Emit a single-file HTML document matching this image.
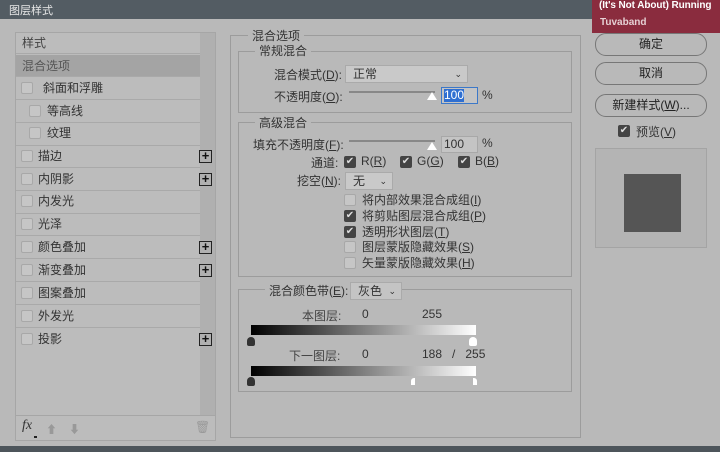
<!DOCTYPE html><html><head><meta charset="utf-8"><style>
*{margin:0;padding:0;box-sizing:border-box}
body{width:720px;height:452px;background:#b9b9b9;font-family:"Liberation Sans","Noto Sans CJK SC",sans-serif;font-size:12px;color:#333;position:relative;overflow:hidden}
.a{position:absolute}
.t{position:absolute;white-space:nowrap}
.cb{position:absolute;width:12px;height:12px;border:1px solid #a8a8a8;background:#c6c6c6;border-radius:2px}
.ck{position:absolute;width:12px;height:12px;background:#444;border-radius:2px;color:#ddd;font-size:10px;line-height:12px;text-align:center}
.row{position:absolute;left:16px;width:184px;height:22px;border-bottom:1px solid #a9a9a9}
.plus{position:absolute;left:183px;width:13px;height:13px;border:1px solid #222;font-size:13px;line-height:10px;text-align:center;color:#111;font-weight:bold}
.box{position:absolute;border:1px solid #9c9c9c}
.btn{position:absolute;left:595px;width:112px;height:23px;border:1px solid #777;border-radius:11px;text-align:center;line-height:21px;font-size:12px;color:#222}
.sel{position:absolute;background:#c9c9c9;border:1px solid #aaa;height:18px;line-height:16px;padding-left:7px}
</style></head><body>
<div class="a" style="left:0;top:0;width:720px;height:19px;background:#535c63"></div>
<div class="t" style="left:9px;top:2px;font-size:11px;color:#e8e8e8">图层样式</div>
<div class="a" style="left:0;top:446px;width:720px;height:6px;background:#4d555b"></div>

<!-- left list -->
<div class="a" style="left:15px;top:32px;width:201px;height:409px;border:1px solid #a6a6a6;background:#bcbcbc"></div>
<div class="a" style="left:200px;top:33px;width:15px;height:382px;background:#b0b0b0"></div>
<div class="a" style="left:16px;top:415px;width:199px;height:1px;background:#a6a6a6"></div>
<div class="row" style="top:32px"><span class="t" style="left:6px;top:2px;color:#444">样式</span></div>
<div class="row" style="top:55px;background:#a4a4a4"><span class="t" style="left:6px;top:2px;color:#555">混合选项</span></div>
<div class="row" style="top:78px"><div class="cb" style="left:5px;top:4px"></div><span class="t" style="left:27px;top:1px">斜面和浮雕</span></div>
<div class="row" style="top:101px"><div class="cb" style="left:13px;top:4px"></div><span class="t" style="left:31px;top:1px">等高线</span></div>
<div class="row" style="top:124px"><div class="cb" style="left:13px;top:3px"></div><span class="t" style="left:31px;top:0px">纹理</span></div>
<div class="row" style="top:146px"><div class="cb" style="left:5px;top:4px"></div><span class="t" style="left:22px;top:1px">描边</span><div class="plus" style="top:4px">+</div></div>
<div class="row" style="top:169px"><div class="cb" style="left:5px;top:4px"></div><span class="t" style="left:22px;top:1px">内阴影</span><div class="plus" style="top:4px">+</div></div>
<div class="row" style="top:192px"><div class="cb" style="left:5px;top:3px"></div><span class="t" style="left:22px;top:0px">内发光</span></div>
<div class="row" style="top:214px"><div class="cb" style="left:5px;top:4px"></div><span class="t" style="left:22px;top:1px">光泽</span></div>
<div class="row" style="top:237px"><div class="cb" style="left:5px;top:4px"></div><span class="t" style="left:22px;top:1px">颜色叠加</span><div class="plus" style="top:4px">+</div></div>
<div class="row" style="top:260px"><div class="cb" style="left:5px;top:4px"></div><span class="t" style="left:22px;top:1px">渐变叠加</span><div class="plus" style="top:4px">+</div></div>
<div class="row" style="top:283px"><div class="cb" style="left:5px;top:4px"></div><span class="t" style="left:22px;top:1px">图案叠加</span></div>
<div class="row" style="top:306px"><div class="cb" style="left:5px;top:4px"></div><span class="t" style="left:22px;top:1px">外发光</span></div>
<div class="row" style="top:329px;border:none"><div class="cb" style="left:5px;top:4px"></div><span class="t" style="left:22px;top:1px">投影</span><div class="plus" style="top:4px">+</div></div>
<div class="t" style="left:22px;top:418px;font-style:italic;font-family:'Liberation Serif',serif;font-size:14px;color:#333">fx</div>
<div class="a" style="left:34px;top:436px;width:3px;height:2px;background:#222"></div>
<div class="t" style="left:46px;top:421px;color:#999;font-size:11px">⬆</div>
<div class="t" style="left:69px;top:421px;color:#999;font-size:11px">⬇</div>
<div class="t" style="left:195px;top:420px;color:#999;font-size:12px">🗑</div>

<!-- middle -->
<div class="box" style="left:230px;top:35px;width:351px;height:403px"></div>
<div class="t" style="left:248px;top:27px;background:#b9b9b9;padding:0 4px">混合选项</div>
<div class="box" style="left:238px;top:51px;width:334px;height:62px"></div>
<div class="t" style="left:255px;top:42px;background:#b9b9b9;padding:0 4px">常规混合</div>
<div class="t" style="left:274px;top:66px">混合模式(<u>D</u>):</div>
<div class="sel" style="left:345px;top:65px;width:123px">正常<span style="position:absolute;right:5px;top:0;font-size:9px">⌄</span></div>
<div class="t" style="left:274px;top:88px">不透明度(<u>O</u>):</div>
<div class="a" style="left:349px;top:91px;width:86px;height:2px;background:#888"></div>
<div class="a" style="left:427px;top:92px;width:0;height:0;border-left:5px solid transparent;border-right:5px solid transparent;border-bottom:8px solid #fff"></div>
<div class="a" style="left:441px;top:87px;width:37px;height:17px;border:1px solid #3c78c8;background:#c4c4c4"><span style="background:#2f6fd1;color:#fff;position:absolute;left:2px;top:1px;line-height:13px">100</span></div>
<div class="t" style="left:482px;top:88px">%</div>

<div class="box" style="left:238px;top:122px;width:334px;height:155px"></div>
<div class="t" style="left:255px;top:114px;background:#b9b9b9;padding:0 4px">高级混合</div>
<div class="t" style="left:253px;top:136px">填充不透明度(<u>F</u>):</div>
<div class="a" style="left:349px;top:140px;width:86px;height:2px;background:#888"></div>
<div class="a" style="left:427px;top:142px;width:0;height:0;border-left:5px solid transparent;border-right:5px solid transparent;border-bottom:8px solid #fff"></div>
<div class="a" style="left:441px;top:136px;width:37px;height:17px;border:1px solid #a8a8a8;background:#c4c4c4;padding-left:2px;line-height:15px">100</div>
<div class="t" style="left:482px;top:136px">%</div>
<div class="t" style="left:311px;top:154px">通道:</div>
<div class="ck" style="left:344px;top:156px">✔</div><span class="t" style="left:361px;top:154px">R(<u>R</u>)</span>
<div class="ck" style="left:400px;top:156px">✔</div><span class="t" style="left:417px;top:154px">G(<u>G</u>)</span>
<div class="ck" style="left:458px;top:156px">✔</div><span class="t" style="left:475px;top:154px">B(<u>B</u>)</span>
<div class="t" style="left:297px;top:172px">挖空(<u>N</u>):</div>
<div class="sel" style="left:345px;top:172px;width:48px">无<span style="position:absolute;right:5px;top:0;font-size:9px">⌄</span></div>
<div class="cb" style="left:344px;top:194px"></div><span class="t" style="left:362px;top:191px">将内部效果混合成组(<u>I</u>)</span>
<div class="ck" style="left:344px;top:210px">✔</div><span class="t" style="left:362px;top:207px">将剪贴图层混合成组(<u>P</u>)</span>
<div class="ck" style="left:344px;top:226px">✔</div><span class="t" style="left:362px;top:223px">透明形状图层(<u>T</u>)</span>
<div class="cb" style="left:344px;top:241px"></div><span class="t" style="left:362px;top:238px">图层蒙版隐藏效果(<u>S</u>)</span>
<div class="cb" style="left:344px;top:257px"></div><span class="t" style="left:362px;top:254px">矢量蒙版隐藏效果(<u>H</u>)</span>

<div class="box" style="left:238px;top:289px;width:334px;height:103px"></div>
<div class="t" style="left:265px;top:282px;background:#b9b9b9;padding:0 4px">混合颜色带(<u>E</u>):</div>
<div class="sel" style="left:350px;top:282px;width:52px;background:#c4c4c4">灰色<span style="position:absolute;right:5px;top:0;font-size:9px">⌄</span></div>
<div class="t" style="left:302px;top:307px;color:#444">本图层:</div>
<div class="t" style="left:362px;top:307px">0</div><div class="t" style="left:422px;top:307px">255</div>
<div class="a" style="left:251px;top:325px;width:225px;height:10px;background:linear-gradient(90deg,#000,#fff)"></div>
<div class="a" style="left:247px;top:337px;width:8px;height:9px;background:#333;border-radius:4px 4px 2px 2px"></div>
<div class="a" style="left:469px;top:337px;width:8px;height:9px;background:#fff;border-radius:4px 4px 2px 2px"></div>
<div class="t" style="left:289px;top:347px;color:#444">下一图层:</div>
<div class="t" style="left:362px;top:347px">0</div><div class="t" style="left:422px;top:347px">188&nbsp;&nbsp;&nbsp;/&nbsp;&nbsp;&nbsp;255</div>
<div class="a" style="left:251px;top:366px;width:225px;height:10px;background:linear-gradient(90deg,#000,#fff)"></div>
<div class="a" style="left:247px;top:377px;width:8px;height:9px;background:#333;border-radius:4px 4px 2px 2px"></div>
<div class="a" style="left:411px;top:378px;width:4px;height:7px;background:#fff;border-radius:3px 0 0 0"></div>
<div class="a" style="left:473px;top:378px;width:4px;height:7px;background:#fff;border-radius:0 3px 0 0"></div>

<!-- right -->
<div class="btn" style="top:33px">确定</div>
<div class="btn" style="top:62px">取消</div>
<div class="btn" style="top:94px">新建样式(<u>W</u>)...</div>
<div class="ck" style="left:618px;top:125px">✔</div><span class="t" style="left:636px;top:123px">预览(<u>V</u>)</span>
<div class="a" style="left:595px;top:148px;width:112px;height:100px;border:1px solid #a4a4a4;background:#b4b4b4"></div>
<div class="a" style="left:624px;top:174px;width:57px;height:58px;background:#555"></div>
<div class="a" style="left:592px;top:0;width:128px;height:33px;background:#8a2c3e"></div>
<div class="t" style="left:599px;top:0px;color:#fff;font-weight:bold;font-size:10px;letter-spacing:-0.1px">(It's Not About) Running</div>
<div class="t" style="left:600px;top:17px;color:#e6d0d4;font-weight:bold;font-size:10px">Tuvaband</div>
</body></html>
